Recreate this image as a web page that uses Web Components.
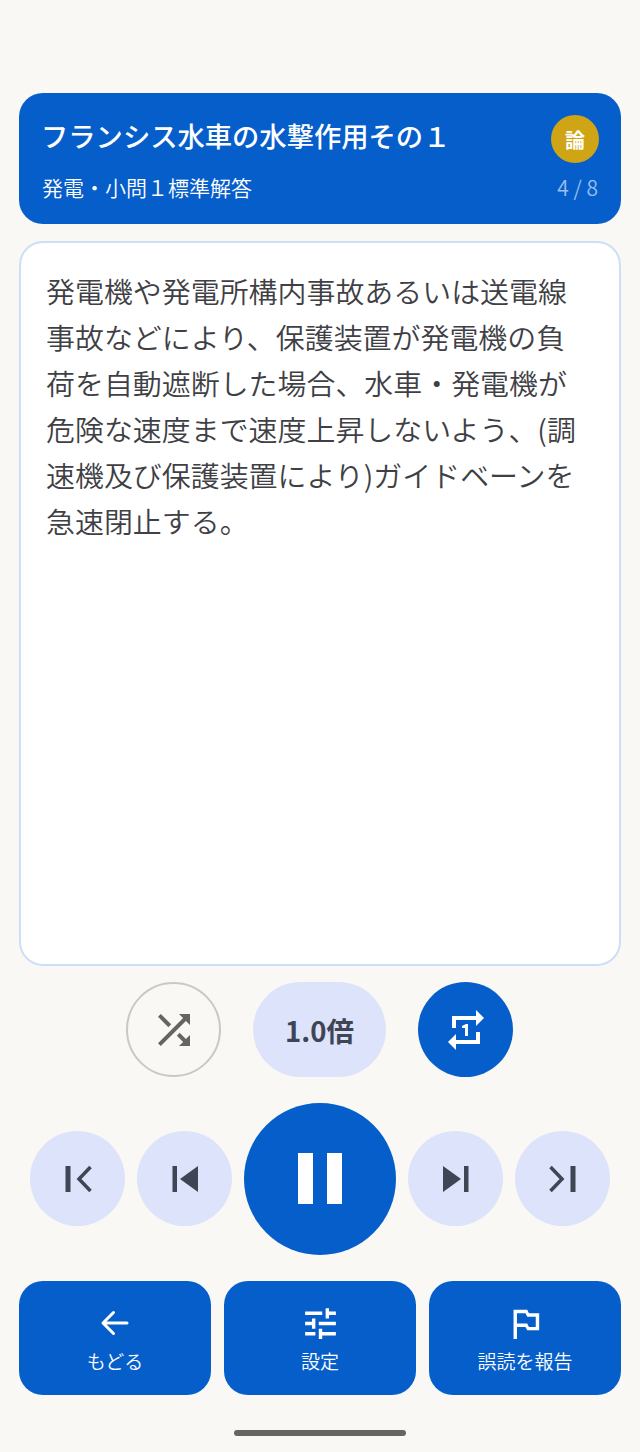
<!DOCTYPE html>
<html lang="ja"><head><meta charset="utf-8">
<style>
html,body{margin:0;padding:0;background:#faf8f5;font-family:"Noto Sans CJK JP","Noto Sans",sans-serif}
</style></head><body>
<player-app></player-app>
<script>
const svg=(s,vb,inner)=>`<svg width="${s}" height="${s}" viewBox="${vb}" aria-hidden="true">${inner}</svg>`;
const def=(name,css,html)=>customElements.define(name,class extends HTMLElement{
  constructor(){super();const r=this.attachShadow({mode:'open'});r.innerHTML=`<style>${css}</style>${html}`;}
});
const F='"Noto Sans CJK JP","Noto Sans",sans-serif';
const D='#3f4555';
def('head-card',`:host{display:block;box-sizing:border-box;height:131px;background:#065ecb;border-radius:24px;padding:22px 22px 0 23px;color:#fff;font-family:${F}}
.t{display:flex;justify-content:space-between;align-items:center;height:48px}
.title{font-size:27.3px;font-weight:500;line-height:40px;margin:-8px 0 0 -1px}
.badge{width:48px;height:48px;border-radius:50%;background:#cfa516;display:grid;place-items:center;font-size:20px;font-weight:700}
.s{display:flex;justify-content:space-between;align-items:center;margin-top:9px;height:30px;padding-right:1px}
.sub{font-size:21px;font-weight:350}
.n{font-size:21px;font-weight:350;color:#9bbfee}`,`<div class="t"><div class="title">フランシス水車の水撃作用その１</div><div class="badge">論</div></div><div class="s"><div class="sub">発電・小問１標準解答</div><div class="n">4 / 8</div></div>`);
def('text-card',`:host{display:block;box-sizing:border-box;height:725px;background:#fff;border:2px solid #cddff7;border-radius:24px;padding:24px 32px 24px 25px;color:#3f3f46;font-family:${F};font-size:28.95px;font-weight:350;line-height:46px}`,`<slot></slot>`);
def('round-btn',`:host{display:inline-grid;place-items:center;box-sizing:border-box;width:var(--w,95px);height:var(--h,95px);border-radius:999px;background:var(--bg,#dde3fa);color:var(--fg,${D});font-family:${F};flex:none}
:host([outline]){background:transparent;border:2px solid #c9c8c4}
::slotted(svg){display:block}`,`<slot></slot>`);
def('nav-btn',`:host{display:flex;flex-direction:column;align-items:center;box-sizing:border-box;height:114px;background:#065ecb;border-radius:24px;color:#fff;font-family:${F};font-size:19px;font-weight:350;padding-top:24px;line-height:28px}
.i{height:36px;margin-bottom:6px;display:flex;align-items:center;justify-content:center}
::slotted(span){display:flex}`,`<div class="i"><slot name="icon"></slot></div><slot></slot>`);
def('player-app',`:host{display:block;box-sizing:border-box;height:1452px;padding:93px 19px 0}
text-card{margin-top:17px}
.r1{display:flex;justify-content:center;gap:32px;margin-top:16px;padding-right:1px}
.r2{display:flex;justify-content:center;align-items:flex-start;gap:12px;margin-top:26px}
.r2 round-btn:not(.big){margin-top:28px}
.sp{font-size:27.5px;font-weight:700;--w:133px}
.big{--w:152px;--h:152px;--bg:#065ecb}
.pr{--bg:#065ecb;--fg:#fff}
.r3{display:grid;grid-template-columns:repeat(3,192px);gap:13px;margin-top:26px}
.hb{width:172px;height:6px;border-radius:3px;background:#666560;margin:35px auto 0}
`,`
<head-card></head-card>
<text-card>発電機や発電所構内事故あるいは送電線事故などにより、保護装置が発電機の負荷を自動遮断した場合、水車・発電機が危険な速度まで速度上昇しないよう、(調速機及び保護装置により)ガイドベーンを急速閉止する。</text-card>
<div class="r1">
<round-btn outline>${svg(48,'0 0 24 24','<path fill="#666560" d="M10.59 9.17 5.41 4 4 5.41l5.17 5.17 1.42-1.41zM14.5 4l2.04 2.04L4 18.59 5.41 20 17.96 7.46 20 9.5V4h-5.5zm.33 9.41-1.41 1.41 3.13 3.13L14.5 20H20v-5.5l-2.04 2.04-3.13-3.13z"/>')}</round-btn>
<round-btn class="sp">1.0倍</round-btn>
<round-btn class="pr">${svg(48,'0 0 24 24','<path fill="#fff" d="M7 7h10v3l4-4-4-4v3H5v6h2V7zm10 10H7v-3l-4 4 4 4v-3h12v-6h-2v4zm-4-2V9h-1l-2 1v1h1.5v4H13z"/>')}</round-btn>
</div>
<div class="r2">
<round-btn>${svg(40,'0 0 40 40',`<path fill="${D}" d="M7.500 7h5v26h-5z"/><path fill="none" stroke="${D}" stroke-width="3.500" d="M32.500 8 21 20l11.500 12"/>`)}</round-btn>
<round-btn>${svg(40,'0 0 40 40',`<path fill="${D}" d="M7.500 7H12v26H7.500zM15 20 33 7v26z"/>`)}</round-btn>
<round-btn class="big">${svg(64,'0 0 64 64','<path fill="#fff" d="M10 6h15v51H10zM39 6h15v51H39z"/>')}</round-btn>
<round-btn>${svg(40,'0 0 40 40',`<path fill="${D}" d="M32.500 7H28v26h4.500zM25 20 7 7v26z"/>`)}</round-btn>
<round-btn>${svg(40,'0 0 40 40',`<path fill="${D}" d="M32.500 7h-5v26h5z"/><path fill="none" stroke="${D}" stroke-width="3.500" d="M7.500 8 19 20 7.500 32"/>`)}</round-btn>
</div>
<div class="r3">
<nav-btn><span slot="icon">${svg(36,'0 0 24 24','<path fill="none" stroke="#fff" stroke-width="2" stroke-linecap="round" stroke-linejoin="round" d="M20 12H4.500M11 5l-7 7 7 7"/>')}</span>もどる</nav-btn>
<nav-btn><span slot="icon">${svg(41,'0 0 24 24','<path fill="#fff" d="M3 17v2h6v-2H3zM3 5v2h10V5H3zm10 16v-2h8v-2h-8v-2h-2v6h2zM7 9v2H3v2h4v2h2V9H7zm14 4v-2H11v2h10zm-6-4h2V7h4V5h-4V3h-2v6z"/>')}</span>設定</nav-btn>
<nav-btn><span slot="icon">${svg(41,'0 0 24 24','<path fill="#fff" d="M14 6l-1-2H5v17h2v-7h5l1 2h7V6h-6zm4 8h-4l-1-2H7V6h5l1 2h5v6z"/>')}</span>誤読を報告</nav-btn>
</div>
<div class="hb"></div>`);
</script>
</body></html>
